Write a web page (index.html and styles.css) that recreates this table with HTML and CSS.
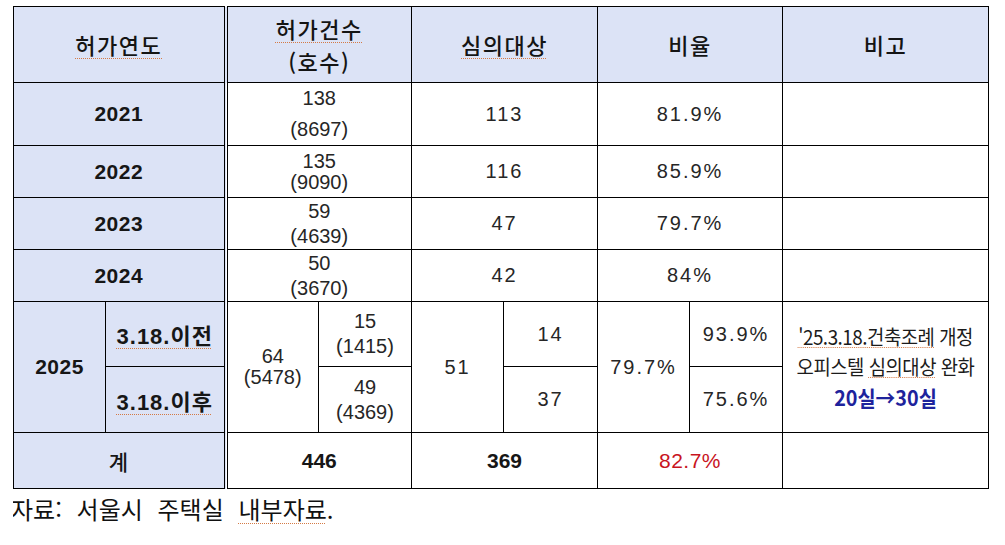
FILE: index.html
```html
<!DOCTYPE html>
<html lang="ko">
<head>
<meta charset="utf-8">
<title>허가연도별 심의대상</title>
<link rel="stylesheet" href="styles.css">
</head>
<body>
<table class="tbl">
  <colgroup>
    <col class="c-a"><col class="c-b"><col class="c-c"><col class="c-d"><col class="c-e"><col class="c-f"><col class="c-g"><col class="c-h"><col class="c-i">
  </colgroup>
  <tr class="r-head">
    <th colspan="2" class="dbl"><span class="sp">허가연도</span></th>
    <th colspan="2" class="h2l"><span class="sp">허가건수</span><br>(호수)</th>
    <th colspan="2"><span class="sp">심의대상</span></th>
    <th colspan="2">비율</th>
    <th>비고</th>
  </tr>
  <tr class="r-21">
    <td colspan="2" class="lbl dbl">2021</td>
    <td colspan="2" class="cnt wide">138<br>(8697)</td>
    <td colspan="2" class="num">113</td>
    <td colspan="2" class="num">81.9%</td>
    <td></td>
  </tr>
  <tr class="r-22">
    <td colspan="2" class="lbl dbl">2022</td>
    <td colspan="2" class="cnt tight">135<br>(9090)</td>
    <td colspan="2" class="num">116</td>
    <td colspan="2" class="num">85.9%</td>
    <td></td>
  </tr>
  <tr class="r-23">
    <td colspan="2" class="lbl dbl">2023</td>
    <td colspan="2" class="cnt">59<br>(4639)</td>
    <td colspan="2" class="num">47</td>
    <td colspan="2" class="num">79.7%</td>
    <td></td>
  </tr>
  <tr class="r-24">
    <td colspan="2" class="lbl dbl">2024</td>
    <td colspan="2" class="cnt">50<br>(3670)</td>
    <td colspan="2" class="num">42</td>
    <td colspan="2" class="num">84%</td>
    <td></td>
  </tr>
  <tr class="r-25a">
    <td rowspan="2" class="lbl">2025</td>
    <td class="lbl dbl"><span class="sp">3.18.이전</span></td>
    <td rowspan="2" class="cnt tight">64<br>(5478)</td>
    <td class="cnt">15<br>(1415)</td>
    <td rowspan="2" class="num">51</td>
    <td class="num">14</td>
    <td rowspan="2" class="num">79.7%</td>
    <td class="num">93.9%</td>
    <td rowspan="2" class="note">
      <div class="note-in">
        <div><span class="sp">'25.3.18.건축조례</span> 개정</div>
        <div>오피스텔 <span class="sp">심의대상</span> 완화</div>
        <div class="blue">20실→30실</div>
      </div>
    </td>
  </tr>
  <tr class="r-25b">
    <td class="lbl dbl"><span class="sp">3.18.이후</span></td>
    <td class="cnt">49<br>(4369)</td>
    <td class="num">37</td>
    <td class="num">75.6%</td>
  </tr>
  <tr class="r-sum">
    <td colspan="2" class="lbl dbl kr">계</td>
    <td colspan="2" class="bold">446</td>
    <td colspan="2" class="bold">369</td>
    <td colspan="2" class="red">82.7%</td>
    <td></td>
  </tr>
</table>
<p class="src">자료: 서울시 주택실 <span class="sp">내부자료</span>.</p>
</body>
</html>
```
FILE: styles.css
```css
body {
  margin: 6px 0 0 13px;
  background: #ffffff;
  color: #1b1b1b;
  font-family: "Liberation Sans", "Noto Sans CJK KR", sans-serif;
}

.tbl {
  border-collapse: collapse;
  table-layout: fixed;
  width: 976px;
}

.c-a { width: 92px; }
.c-b { width: 120px; }
.c-c { width: 93px; }
.c-d { width: 93px; }
.c-e { width: 92px; }
.c-f { width: 94px; }
.c-g { width: 92px; }
.c-h { width: 93px; }
.c-i { width: 206px; }

.tbl th,
.tbl td {
  border: 1px solid #000;
  padding: 0;
  text-align: center;
  vertical-align: middle;
}

.tbl td {
  font-weight: normal;
}

.tbl th {
  background: #dce3f6;
  font-family: "Noto Sans CJK KR", sans-serif;
  font-size: 22px;
  font-weight: 500;
  letter-spacing: 1.5px;
  color: #141414;
  line-height: 33px;
}

.tbl .dbl {
  border-right: 4px double #000;
}

.r-head { height: 76px; }
.r-21 { height: 63px; }
.r-22 { height: 52px; }
.r-23 { height: 52px; }
.r-24 { height: 52px; }
.r-25a { height: 65px; }
.r-25b { height: 66px; }
.r-sum { height: 56px; }

.sp {
  text-decoration: underline dotted #d47a45;
  text-decoration-thickness: 1px;
  text-underline-offset: 4px;
}

.tbl .lbl {
  background: #dce3f6;
  font-size: 21px;
  font-weight: bold;
  letter-spacing: 0.5px;
  color: #161616;
}

.tbl .lbl .sp {
  font-size: 22px;
  letter-spacing: 1px;
}

.tbl .kr {
  font-family: "Noto Sans CJK KR", sans-serif;
  font-weight: 500;
}

.cnt {
  font-size: 20px;
  line-height: 25px;
  color: #262626;
}

.cnt.wide { line-height: 31px; }
.cnt.tight { line-height: 21px; }

.num {
  font-size: 20px;
  letter-spacing: 2px;
  color: #262626;
}

.tbl .bold {
  font-size: 21px;
  font-weight: bold;
  color: #161616;
}

.red {
  font-size: 21px;
  color: #c8141e;
  letter-spacing: 0.5px;
}

.note {
  font-family: "Noto Sans CJK KR", sans-serif;
  font-size: 20px;
  line-height: 30px;
  color: #1b1b1b;
}

.note-in {
  margin: 0 -24px;
  white-space: nowrap;
  transform: scaleX(0.94);
  letter-spacing: -0.5px;
}

.note-in .sp {
  text-underline-offset: 2px;
}

.blue {
  color: #1e239c;
  font-weight: bold;
  font-size: 21px;
  line-height: 30px;
  letter-spacing: 0;
}

.src {
  margin: 4px 0 0 -2px;
  font-family: "Noto Sans CJK KR", sans-serif;
  font-size: 24px;
  line-height: 32px;
  word-spacing: 8px;
  color: #111;
}
```
